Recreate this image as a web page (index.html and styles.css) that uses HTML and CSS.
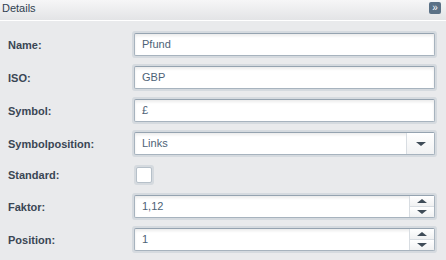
FILE: index.html
```html
<!DOCTYPE html>
<html>
<head>
<meta charset="utf-8">
<link rel="stylesheet" href="styles.css">
</head>
<body>
<div class="panel">
  <div class="header">
    <span class="title">Details</span>
    <span class="collapse">»</span>
  </div>
  <div class="form">
    <label class="lbl">Name:</label>
    <div class="field"><div class="box">Pfund</div></div>

    <label class="lbl">ISO:</label>
    <div class="field"><div class="box">GBP</div></div>

    <label class="lbl">Symbol:</label>
    <div class="field"><div class="box">£</div></div>

    <label class="lbl">Symbolposition:</label>
    <div class="field"><div class="box withbtn"><span class="val">Links</span><span class="trig"><span class="down"></span></span></div></div>

    <label class="lbl">Standard:</label>
    <div class="checkrow"><div class="check"><div class="checkin"></div></div></div>

    <label class="lbl">Faktor:</label>
    <div class="field"><div class="box withbtn"><span class="val">1,12</span><span class="spin"><span class="sp"><span class="up"></span></span><span class="sp"><span class="down"></span></span></span></div></div>

    <label class="lbl">Position:</label>
    <div class="field"><div class="box withbtn"><span class="val">1</span><span class="spin"><span class="sp"><span class="up"></span></span><span class="sp"><span class="down"></span></span></span></div></div>
  </div>
</div>
</body>
</html>
```
FILE: styles.css
```css
html, body {
  margin: 0;
  padding: 0;
  background: #e9eaec;
  font-family: "Liberation Sans", Arial, sans-serif;
}
.panel {
  width: 446px;
  height: 260px;
  background: #e9eaec;
  overflow: hidden;
}
.header {
  height: 21px;
  box-sizing: border-box;
  border-bottom: 1px solid #ffffff;
  background: linear-gradient(#f6f6f7, #e3e4e6);
  display: flex;
  align-items: center;
  justify-content: space-between;
  padding: 0 5px 0 2px;
}
.title {
  font-size: 11px;
  color: #2f3f50;
  margin-top: -4px;
}
.collapse {
  width: 12px;
  height: 12px;
  background: #5b7186;
  border-radius: 2px;
  color: #ffffff;
  font-size: 10px;
  line-height: 11px;
  text-align: center;
  margin-top: -4px;
}
.form {
  display: grid;
  grid-template-columns: 124px 305px;
  row-gap: 6px;
  padding: 10px 0 0 8px;
  align-items: center;
}
.lbl {
  font-size: 11px;
  font-weight: bold;
  color: #3a4654;
}
.field {
  height: 27px;
  box-sizing: border-box;
  background: #d5dadf;
  border-radius: 3px;
  padding: 2px;
}
.box {
  height: 100%;
  box-sizing: border-box;
  border: 1px solid #a7b3be;
  border-top-color: #95a3b0;
  border-radius: 2px;
  background: #ffffff;
  box-shadow: inset 0 2px 3px rgba(0,0,0,0.08);
  font-size: 11px;
  color: #4d6276;
  line-height: 21px;
  padding-left: 7px;
}
.withbtn {
  display: flex;
  padding-left: 0;
}
.val {
  flex: 1;
  padding-left: 7px;
}
.trig {
  width: 27px;
  border-left: 1px solid #d8dde2;
  display: flex;
  align-items: center;
  justify-content: center;
  background: linear-gradient(#ffffff, #f1f2f3);
}
.spin {
  width: 24px;
  border-left: 1px solid #d8dde2;
  display: flex;
  flex-direction: column;
}
.sp {
  flex: 1;
  display: flex;
  align-items: center;
  justify-content: center;
  background: linear-gradient(#ffffff, #f0f1f2);
}
.sp + .sp {
  border-top: 1px solid #d8dde2;
}
.down {
  width: 0;
  height: 0;
  border-left: 5px solid transparent;
  border-right: 5px solid transparent;
  border-top: 4px solid #3f4c58;
}
.up {
  width: 0;
  height: 0;
  border-left: 5px solid transparent;
  border-right: 5px solid transparent;
  border-bottom: 4px solid #3f4c58;
}
.checkrow {
  height: 20px;
  margin: 2px 0;
  display: flex;
  padding-left: 2px;
}
.check {
  width: 20px;
  height: 20px;
  box-sizing: border-box;
  background: #d5dadf;
  border-radius: 3px;
  padding: 2px;
}
.checkin {
  height: 100%;
  box-sizing: border-box;
  border: 1px solid #b6c0c9;
  border-radius: 2px;
  background: #ffffff;
}
```
